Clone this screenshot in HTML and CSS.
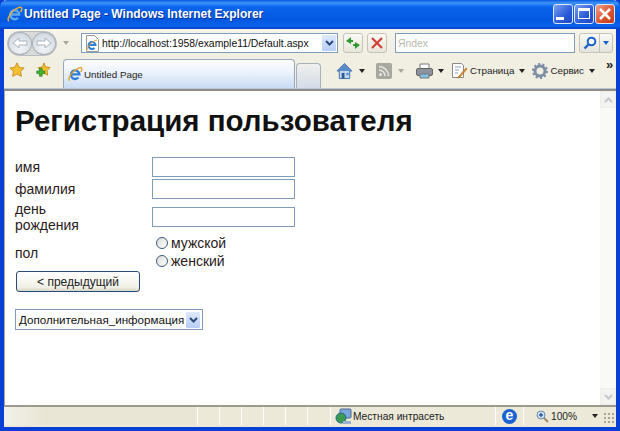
FILE: index.html
```html
<!DOCTYPE html>
<html lang="en">

<head>
    <meta charset="UTF-8">
    <title>Untitled Page</title>
    <link rel="stylesheet" href="styles.css">
</head>

<body>
    <div class="window">
        <div class="titlebar">
            <svg class="ie-logo" width="17" height="18" viewBox="0 0 18 18">
                <path d="M5 9.500h9A4.800 4.800 0 1 0 12.800 13" fill="none" stroke="#5aa8f0" stroke-width="2.600"/>
                <path d="M3 16.500C0 14 7 4 14 2c3-1 3.500 2 1.500 5" fill="none" stroke="#f0b030" stroke-width="1.500"/>
            </svg>
            <span class="title">Untitled Page - Windows Internet Explorer</span>
            <div class="capbtns">
                <div class="capbtn"><span class="min"></span></div>
                <div class="capbtn"><span class="max"></span></div>
                <div class="capbtn close">
                    <svg width="14" height="14" viewBox="0 0 14 14"><path d="M2 2l10 10M12 2L2 12" stroke="#fff" stroke-width="2.600"/></svg>
                </div>
            </div>
        </div>

        <div class="navrow">
            <div class="navpill">
                <div class="navbtn"><svg width="18" height="14" viewBox="0 0 18 14"><path d="M2 7l6-5v3h8v4H8v3z" fill="#fff" stroke="#a9b3c0"/></svg></div>
                <div class="navbtn"><svg width="18" height="14" viewBox="0 0 18 14"><path d="M16 7l-6-5v3H2v4h8v3z" fill="#fff" stroke="#a9b3c0"/></svg></div>
            </div>
            <span class="arrow grey navdrop"></span>
            <div class="addressbar">
                <svg class="pageicon" width="15" height="17" viewBox="0 0 15 17">
                    <path d="M1.500.5h8l4 4v12h-12z" fill="#fff" stroke="#9a9a9a"/>
                    <path d="M4 10h6.500A3.500 3.500 0 1 0 9.500 13" fill="none" stroke="#2f7fd8" stroke-width="2"/>
                    <path d="M2 15c0-3 5-9 10-10" fill="none" stroke="#e8a020"/>
                </svg>
                <span class="url">http://localhost:1958/example11/Default.aspx</span>
                <div class="dropbtn"><svg width="9" height="6" viewBox="0 0 9 6"><path d="M1 1l3.500 3.500L8 1" fill="none" stroke="#2c4a80" stroke-width="2"/></svg></div>
            </div>
            <div class="toolbtn">
                <svg width="16" height="14" viewBox="0 0 16 14"><path d="M6 1L1 5l5 3V6h2V4H6zM10 13l5-4-5-3v2H8v2h2z" fill="#2e9a30"/></svg>
            </div>
            <div class="toolbtn">
                <svg width="12" height="12" viewBox="0 0 12 12"><path d="M1 1l10 10M11 1L1 11" stroke="#d0403a" stroke-width="2.200"/></svg>
            </div>
            <div class="searchbox">Яndex</div>
            <div class="searchbtns">
                <div class="searchgo">
                    <svg width="14" height="14" viewBox="0 0 14 14"><circle cx="8.500" cy="5.500" r="3.800" fill="#fff" stroke="#1c62c8" stroke-width="2"/><path d="M5.500 8.500L1.500 12.500" stroke="#1c62c8" stroke-width="2.400"/></svg>
                </div>
                <div class="searchdrop"><span class="arrow blue"></span></div>
            </div>
        </div>

        <div class="tabrow">
            <svg class="fav" width="16" height="16" viewBox="0 0 18 18"><path d="M9 1l2.500 5 5.500.8-4 3.900 1 5.500L9 13.600l-5 2.600 1-5.500-4-3.900L6.500 6z" fill="#f4c030" stroke="#c88a20"/></svg>
            <svg class="fav addfav" width="16" height="16" viewBox="0 0 18 18">
                <path d="M10 1l2 4.500 5 .8-3.500 3.500.8 5L10 12.500 6 14.800l.8-5L3.500 6.300l5-.8z" fill="#f4c030" stroke="#c88a20"/>
                <path d="M5 7v3H2v3h3v3h3v-3h3v-3H8V7z" fill="#46b030" stroke="#1f7a1a" stroke-width=".7"/>
            </svg>
            <div class="tab">
                <svg width="16" height="16" viewBox="0 0 18 18">
                    <path d="M5 9.500h9A4.800 4.800 0 1 0 12.800 13" fill="none" stroke="#2f7fd8" stroke-width="2.600"/>
                    <path d="M3 16.500C0 14 7 4 14 2c3-1 3.500 2 1.500 5" fill="none" stroke="#e8a020" stroke-width="1.500"/>
                </svg>
                <span>Untitled Page</span>
            </div>
            <div class="newtab"></div>
            <div class="commands">
                <svg width="17" height="18" viewBox="0 0 18 18"><path d="M9 1L1 9h2.500v8h11V9H17z" fill="#c8d8ec" stroke="#3a6aa8"/><path d="M9 1L1 9h16z" fill="#5a8ac8"/><path d="M6 11h3v6H6z" fill="#2a5a98"/><path d="M11 11h2.500v2.500H11z" fill="#4a90d8"/></svg>
                <span class="arrow home-drop"></span>
                <svg class="rss" width="16" height="16" viewBox="0 0 16 16"><rect width="16" height="16" rx="2" fill="#a8a8a0"/><circle cx="4.500" cy="11.500" r="1.500" fill="#e6e6e0"/><path d="M3 7a6 6 0 0 1 6 6M3 3.500a9.500 9.500 0 0 1 9.500 9.500" fill="none" stroke="#e6e6e0" stroke-width="1.600"/></svg>
                <span class="arrow grey rss-drop"></span>
                <svg class="printer" width="17" height="16" viewBox="0 0 17 16"><path d="M4 1h9v5H4z" fill="#fff" stroke="#777"/><rect x=".5" y="5.500" width="16" height="7" rx="1.500" fill="#8c939c" stroke="#666"/><path d="M4 11h9v4H4z" fill="#7ec4ea" stroke="#777"/></svg>
                <span class="arrow print-drop"></span>
                <svg class="pagecmd" width="17" height="17" viewBox="0 0 17 17"><path d="M1.500 1.500h9l2 2v12h-11z" fill="#fff" stroke="#8a8a8a"/><path d="M4 5h6M4 8h4M4 11h3" stroke="#8aa0b8"/><path d="M15 6l-7 8-1.500 2 2.500-1 7-8z" fill="#e89030" stroke="#a86010" stroke-width=".6"/></svg>
                <span class="cmdtext">Страница</span>
                <span class="arrow page-drop"></span>
                <svg class="gear" width="16" height="16" viewBox="0 0 16 16"><circle cx="8" cy="8" r="5" fill="none" stroke="#7e8ea4" stroke-width="3"/><circle cx="8" cy="8" r="7" fill="none" stroke="#7e8ea4" stroke-width="2" stroke-dasharray="2.200 2.200"/></svg>
                <span class="cmdtext">Сервис</span>
                <span class="arrow service-drop"></span>
                <span class="more">»</span>
            </div>
        </div>

        <div class="viewport">
            <div class="content">
                <h1>Регистрация пользователя</h1>
                <div class="form">
                    <label class="lbl">имя</label>
                    <input class="txt" type="text">
                    <label class="lbl">фамилия</label>
                    <input class="txt" type="text">
                    <label class="lbl">день<br>рождения</label>
                    <input class="txt" type="text">
                    <label class="lbl">пол</label>
                    <div class="radios">
                        <div class="radio"><span class="dot"></span>мужской</div>
                        <div class="radio"><span class="dot"></span>женский</div>
                    </div>
                </div>
                <div class="prev">&lt; предыдущий</div>
                <div class="select">
                    <span>Дополнительная_информация</span>
                    <div class="dropbtn"><svg width="9" height="6" viewBox="0 0 9 6"><path d="M1 1l3.500 3.500L8 1" fill="none" stroke="#2c4a80" stroke-width="2"/></svg></div>
                </div>
            </div>
            <div class="scrollbar">
                <div class="sbtn"><svg width="9" height="6" viewBox="0 0 9 6"><path d="M1 5l3.500-3.500L8 5" fill="none" stroke="#c4c8cc" stroke-width="2"/></svg></div>
                <div class="sbtn"><svg width="9" height="6" viewBox="0 0 9 6"><path d="M1 1l3.500 3.500L8 1" fill="none" stroke="#c4c8cc" stroke-width="2"/></svg></div>
            </div>
        </div>

        <div class="statusbar">
            <div class="st-main"></div>
            <div class="st-cell"></div>
            <div class="st-cell"></div>
            <div class="st-cell"></div>
            <div class="st-cell"></div>
            <div class="st-cell"></div>
            <div class="st-cell"></div>
            <div class="st-zone">
                <svg width="17" height="17" viewBox="0 0 17 17"><rect x="5" y="1" width="11" height="9" rx="1" fill="#7aa6d8" stroke="#4a6a98"/><circle cx="6" cy="10" r="5" fill="#3a9a50" stroke="#2a6a90"/><rect x="8" y="13" width="8" height="3" fill="#9ab4d0"/></svg>
                <span>Местная интрасеть</span>
            </div>
            <div class="st-ie"><span class="ie-round">e</span></div>
            <div class="st-zoom">
                <svg width="13" height="13" viewBox="0 0 13 13"><circle cx="5" cy="5" r="4" fill="#d4e4f4" stroke="#6a8ab0"/><path d="M3 5h4M5 3v4" stroke="#2a5aa8" stroke-width="1.400"/><path d="M8 8l4 4" stroke="#9a8a6a" stroke-width="2"/></svg>
                <span>100%</span>
                <span class="arrow zoom-drop"></span>
                <span class="grip"></span>
            </div>
        </div>
    </div>
</body>

</html>
```

FILE: styles.css
```css
* {
    margin: 0;
    padding: 0;
    box-sizing: border-box;
}

body {
    width: 620px;
    height: 431px;
    overflow: hidden;
    font-family: "Liberation Sans", Arial, sans-serif;
}

.window {
    display: flex;
    flex-direction: column;
    width: 620px;
    height: 431px;
    border: solid #0a3fd6;
    border-width: 0 4px 4px;
    background: #ece9d8;
}

/* title bar */
.titlebar {
    display: flex;
    align-items: center;
    height: 29px;
    margin: 0 -4px;
    padding: 0 5px 2px 6px;
    border-radius: 7px 7px 0 0;
    background: linear-gradient(#0a58e0 0, #3d93f8 3px, #0a64ec 7px, #0458e0 20px, #0a62ee 26px, #0340c4 29px);
}

.ie-logo {
    flex: none;
}

.title {
    margin-left: 1px;
    font-size: 12px;
    font-weight: bold;
    color: #fff;
    text-shadow: 1px 1px 0 #0a2f9a;
}

.capbtns {
    display: flex;
    gap: 1px;
    margin-left: auto;
}

.capbtn {
    display: flex;
    align-items: center;
    justify-content: center;
    width: 20px;
    height: 20px;
    border: 1px solid #dfe8fa;
    border-radius: 3px;
    background: linear-gradient(135deg, #7ba2ee, #2a5ad8 60%, #2048c0);
}

.capbtn.close {
    background: linear-gradient(135deg, #eea48c, #dc5430 55%, #c03a1a);
}

.min {
    width: 8px;
    height: 3px;
    margin: 9px 6px 0 0;
    background: #fff;
}

.max {
    width: 12px;
    height: 11px;
    border: 1px solid #fff;
    border-top-width: 3px;
}

/* address row */
.navrow {
    display: flex;
    align-items: center;
    height: 28px;
    padding-left: 3px;
    background: linear-gradient(#f6f4ea, #f1efe2);
    font-size: 11px;
}

.navpill {
    display: flex;
    width: 50px;
    height: 25px;
    border-radius: 13px;
    background: #d8dadc;
    border: 1px solid #b9bcc0;
}

.navbtn {
    display: flex;
    align-items: center;
    justify-content: center;
    width: 24px;
    height: 23px;
    border: 1px solid #aab0b8;
    border-radius: 50%;
    background: radial-gradient(circle at 50% 70%, #f4f6f8, #c9d2dc);
}

.navdrop {
    margin: 0 12px 0 6px;
}

.addressbar {
    display: flex;
    align-items: center;
    flex: none;
    width: 257px;
    height: 20px;
    border: 1px solid #7f9db9;
    background: #fff;
    padding-left: 3px;
}

.pageicon {
    flex: none;
}

.url {
    margin-left: 2px;
    font-size: 10.400px;
    color: #111;
    white-space: nowrap;
}

.dropbtn {
    display: flex;
    align-items: center;
    justify-content: center;
    flex: none;
    width: 16px;
    height: 18px;
    margin-left: auto;
    border-radius: 2px;
    background: linear-gradient(#dfe9fb, #b7cdf6);
    border: 1px solid #fff;
}

.toolbtn {
    display: flex;
    align-items: center;
    justify-content: center;
    flex: none;
    width: 20px;
    height: 20px;
    margin-left: 4px;
    border: 1px solid #c6c4b8;
    border-radius: 3px;
    background: linear-gradient(#fafaf6, #e8e6da);
}

.addressbar + .toolbtn {
    margin-left: 5px;
}

.searchbox {
    display: flex;
    align-items: center;
    flex: none;
    width: 180px;
    height: 20px;
    margin-left: 8px;
    padding-left: 2px;
    border: 1px solid #7f9db9;
    background: #fff;
    font-size: 10.400px;
    color: #b8b8b0;
}

.searchbtns {
    display: flex;
    flex: none;
    height: 20px;
    margin-left: 4px;
    border: 1px solid #c6c4b8;
    border-radius: 3px;
    background: linear-gradient(#fafaf6, #e4e4de);
}

.searchgo {
    display: flex;
    align-items: center;
    justify-content: center;
    width: 20px;
    border-right: 1px solid #c6c4b8;
}

.searchdrop {
    display: flex;
    align-items: center;
    justify-content: center;
    width: 12px;
}

/* little dropdown triangle */
.arrow {
    display: inline-block;
    flex: none;
    width: 0;
    height: 0;
    border: 3px solid transparent;
    border-top: 4px solid #222;
    border-bottom: 0;
}

.arrow.grey {
    border-top-color: #a8a8a0;
}

.arrow.blue {
    border-top-color: #1c62c8;
}

/* tabs row */
.tabrow {
    display: flex;
    align-items: flex-end;
    height: 34px;
    padding-left: 3px;
    background: #f1efe2;
    border-bottom: 2px solid #8f8e86;
    box-shadow: inset 0 -1px 0 #b4c4dc;
    font-size: 9.800px;
}

.fav {
    flex: none;
    align-self: flex-start;
    margin: 5px 10px 0 0;
}

.fav:first-child {
    margin-left: 2px;
}

.addfav {
    margin-right: 12px;
}

.tab {
    display: flex;
    flex: none;
    align-items: center;
    gap: 1px;
    width: 232px;
    height: 29px;
    margin-bottom: 1px;
    padding: 0 0 0 3px;
    border: 1px solid #98a8c0;
    border-bottom: 0;
    border-radius: 4px 4px 0 0;
    background: linear-gradient(#fbfcfe, #eef4fb 40%, #c9dcf4);
    color: #222;
}

.newtab {
    flex: none;
    width: 25px;
    height: 25px;
    margin: 0 0 1px 1px;
    border: 1px solid #a8b0bc;
    border-bottom: 0;
    border-radius: 4px 4px 0 0;
    background: linear-gradient(#f0f0ee, #d4dce8);
}

.commands {
    display: flex;
    flex: none;
    align-items: center;
    align-self: flex-start;
    height: 27px;
    margin-left: 15px;
    color: #222;
}

.home-drop {
    margin: 0 11px 0 6px;
}

.rss-drop {
    margin: 0 12px 0 6px;
}

.print-drop {
    margin: 0 7px 0 5px;
}

.cmdtext {
    margin-left: 2px;
    white-space: nowrap;
}

.page-drop {
    margin: 0 7px 0 5px;
}

.service-drop {
    margin-left: 5px;
}

.more {
    margin: -13px 0 0 11px;
    font-size: 13px;
    font-weight: bold;
}

/* page area */
.viewport {
    display: flex;
    flex: 1;
    min-height: 0;
    border-left: 1px solid #aca899;
    background: #fff;
}

.content {
    flex: 1;
    padding: 13px 0 0 10px;
    color: #2a1a1a;
}

h1 {
    font-size: 29.500px;
    line-height: 34px;
    font-weight: bold;
    color: #111;
}

.form {
    display: grid;
    grid-template-columns: 137px 143px;
    align-items: center;
    margin-top: 19px;
    font-size: 14px;
    line-height: 16px;
    row-gap: 2px;
}

.lbl {
    display: block;
}

.txt {
    display: block;
    width: 143px;
    height: 20px;
    border: 1px solid #7f9db9;
    background: #fff;
}

.radios {
    margin-top: -1px;
    padding-left: 4px;
}

.radio {
    display: flex;
    align-items: center;
    height: 18px;
}

.dot {
    width: 12px;
    height: 12px;
    margin-right: 3px;
    border: 1px solid #3a5a80;
    border-radius: 50%;
    background: linear-gradient(135deg, #dcdcd4, #fff);
}

.prev {
    display: flex;
    align-items: center;
    justify-content: center;
    width: 124px;
    height: 21px;
    margin: 1px 0 0 1px;
    border: 1px solid #2a4a78;
    border-radius: 3px;
    background: linear-gradient(#fff, #f2f1e8 80%, #d8d4c4);
    font-size: 12px;
    color: #222;
}

.select {
    display: flex;
    align-items: center;
    width: 188px;
    height: 21px;
    margin-top: 17px;
    padding: 0 1px 0 3px;
    border: 1px solid #7f9db9;
    font-size: 11.600px;
    color: #111;
    white-space: nowrap;
}

.scrollbar {
    display: flex;
    flex-direction: column;
    justify-content: space-between;
    width: 16px;
    background: #f9f9f6;
}

.sbtn {
    display: flex;
    align-items: center;
    justify-content: center;
    height: 17px;
    border: 1px solid #eeeeea;
    background: #f3f3ef;
}

/* status bar */
.statusbar {
    display: flex;
    align-items: stretch;
    height: 22px;
    border-top: 2px solid #9c9a8c;
    padding-bottom: 2px;
    background: #ece9d8;
    font-size: 10.200px;
    color: #222;
}

.st-main {
    width: 193px;
    background: linear-gradient(90deg, #f2f1ea, #e9e6d6 40px);
}

.st-cell {
    width: 22px;
    border-left: 1px solid #fff;
}

.st-zone {
    display: flex;
    align-items: center;
    gap: 1px;
    width: 165px;
    padding-left: 4px;
    margin-left: 1px;
    border-left: 1px solid #fff;
    white-space: nowrap;
}

.st-ie {
    display: flex;
    align-items: center;
    justify-content: center;
    width: 28px;
    border-left: 1px solid #fff;
}

.ie-round {
    width: 15px;
    height: 15px;
    line-height: 13px;
    border-radius: 50%;
    background: #1a62d0;
    color: #fff;
    font-size: 14px;
    font-weight: bold;
    text-align: center;
}

.st-zoom {
    display: flex;
    align-items: center;
    gap: 2px;
    flex: 1;
    padding-left: 12px;
    border-left: 1px solid #fff;
}

.zoom-drop {
    margin-left: 13px;
}

.grip {
    width: 12px;
    height: 12px;
    margin: 4px 1px 0 auto;
    background: radial-gradient(#a8a69a 1px, transparent 1.500px) 0 0 / 4px 4px;
}
```
